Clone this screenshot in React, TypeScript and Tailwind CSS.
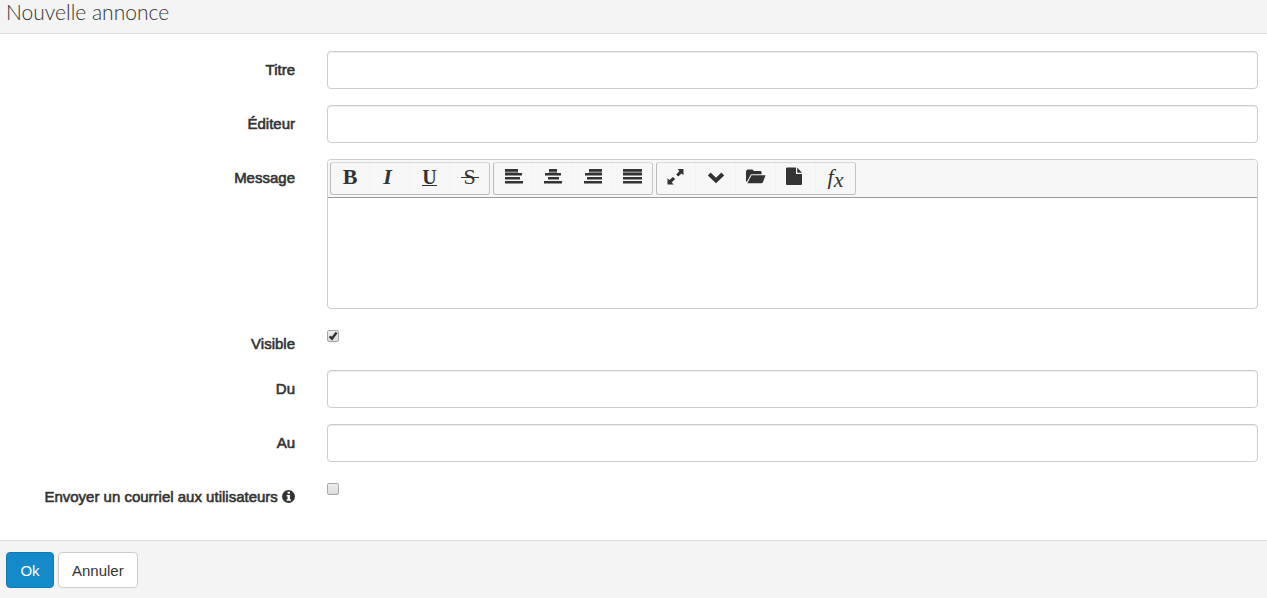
import { useState } from "react";
import type { ReactNode } from "react";

const fieldClass =
  "block h-[38px] w-full rounded border border-[#ccc] bg-white px-3 text-[15px] text-[#555] shadow-[inset_0_1px_1px_rgba(0,0,0,0.075)] outline-none focus:border-[#66afe9]";

interface FormRowProps {
  label: ReactNode;
  htmlFor: string;
  children: ReactNode;
}

function FormRow({ label, htmlFor, children }: FormRowProps) {
  return (
    <div className="flex">
      <label
        htmlFor={htmlFor}
        className="w-1/4 px-4 pt-2 text-right text-[15px] leading-[21px] [-webkit-text-stroke:0.04em_#333]"
      >
        {label}
      </label>
      <div className="w-3/4 px-4">{children}</div>
    </div>
  );
}

interface CheckBoxProps {
  id: string;
  defaultChecked?: boolean;
}

function CheckBox({ id, defaultChecked }: CheckBoxProps) {
  return (
    <div className="grid w-3 pt-[5px]">
      <input
        id={id}
        type="checkbox"
        defaultChecked={defaultChecked}
        className="peer col-start-1 row-start-1 size-3 appearance-none rounded-xs border border-[#a6a6a6] bg-linear-to-b from-[#eee] to-[#dcdcdc]"
      />
      <svg
        viewBox="0 0 12 12"
        className="pointer-events-none invisible col-start-1 row-start-1 size-3 peer-checked:visible"
      >
        <path d="M2.6 6.3L5 8.6L9.6 2.6" fill="none" stroke="#333" strokeWidth="2.4" />
      </svg>
    </div>
  );
}

interface AlignIconProps {
  bars: [number, number][];
}

// Each bar is [left, right] on a 19px wide glyph
function AlignIcon({ bars }: AlignIconProps) {
  return (
    <svg viewBox="0 0 19 16" className="h-4 w-[19px]" fill="#333">
      <rect x={bars[0][0]} y="2" width={bars[0][1] - bars[0][0]} height="2" opacity="0.55" />
      {bars.map(([left, right], i) => (
        <rect key={i} x={left} y={i * 4} width={right - left} height="2.5" />
      ))}
    </svg>
  );
}

interface Tool {
  title: string;
  icon: ReactNode;
}

const textTools: Tool[] = [
  { title: "Gras", icon: <b className="font-bold">B</b> },
  { title: "Italique", icon: <i className="pr-1 font-bold">I</i> },
  {
    title: "Souligné",
    icon: (
      <span className="border-b border-[#333] text-[20px] leading-[16px] font-bold">U</span>
    ),
  },
  {
    title: "Barré",
    icon: (
      <span className="grid items-center justify-items-center">
        <span className="col-start-1 row-start-1">S</span>
        <span className="col-start-1 row-start-1 h-px w-[18px] bg-[#333]" />
      </span>
    ),
  },
];

const alignTools: Tool[] = [
  { title: "Aligner à gauche", icon: <AlignIcon bars={[[1, 14], [1, 18], [1, 16], [1, 19]]} /> },
  { title: "Centrer", icon: <AlignIcon bars={[[6, 14], [2, 18], [5, 16], [1, 19]]} /> },
  { title: "Aligner à droite", icon: <AlignIcon bars={[[6, 19], [2, 19], [4, 19], [1, 19]]} /> },
  { title: "Justifier", icon: <AlignIcon bars={[[0, 19], [0, 19], [0, 19], [0, 19]]} /> },
];

const insertTools: Tool[] = [
  {
    title: "Plein écran",
    icon: (
      <svg viewBox="0 0 18 16" className="h-4 w-[18px]" fill="#333">
        <path d="M10.5 0H16.5V6.3L14.6 4.4L11.3 7.5L9.2 5.4L12.4 2.1ZM.5 15.5V9.2L2.5 11.1L5.9 8L8.1 10.1L4.7 13.4L6.8 15.5Z" />
      </svg>
    ),
  },
  {
    title: "Afficher plus",
    icon: (
      <svg viewBox="0 0 18 16" className="h-4 w-[18px]">
        <path d="M2.2 5L9 11.4L15.8 5" fill="none" stroke="#333" strokeWidth="4" />
      </svg>
    ),
  },
  {
    title: "Fichiers",
    icon: (
      <svg viewBox="0 0 20 16" className="h-4 w-5" fill="#333">
        <path d="M0 13V2L1.5 .5H6.5L8 2H14.5Q15.6 2 15.6 3.5V5.2H5L1.3 12Z" />
        <path d="M5.5 6.2H19.5L17 13Q16.5 14.2 15.2 14.2H1.4Z" />
      </svg>
    ),
  },
  {
    title: "Document",
    icon: (
      <svg viewBox="0 0 20 20" className="h-5 w-5" fill="#333">
        <path d="M0 1.5Q0 .5 1 .5H10V7H16V17Q16 18 15 18H1Q0 18 0 17ZM11.2 .5L16 5.8H11.2Z" />
      </svg>
    ),
  },
  {
    title: "Formule",
    icon: (
      <span className="flex items-start pt-[2px] italic">
        f<span className="pt-[3px]">x</span>
      </span>
    ),
  },
];

function ToolGroup({ tools }: { tools: Tool[] }) {
  return (
    <div className="flex h-[33px] rounded-[3px] border border-[#d9d9d9] border-r-[#c5c5c5] border-b-[#bbb] border-l-[#bbb]">
      {tools.map(({ title, icon }, i) => (
        <button
          key={title}
          type="button"
          title={title}
          aria-label={title}
          className={`flex h-7 items-center justify-center font-['Liberation_Serif',serif] text-[22px] leading-none text-[#333] hover:bg-[#eee] ${
            i > 0 ? "w-10 border-l border-[#f2f2f2]" : "w-[38px]"
          }`}
        >
          {icon}
        </button>
      ))}
    </div>
  );
}

function InfoIcon() {
  return (
    <svg viewBox="0 0 14 14" className="inline-block size-[13px] align-[-1px]">
      <circle cx="7" cy="7" r="7" fill="#333" />
      <path d="M6 2H8.6V4H6ZM5 5.4H8.6V10H9.6V11.6H5V10H6V7H5Z" fill="#fff" />
    </svg>
  );
}

export default function App() {
  const [title, setTitle] = useState("");
  const [editor, setEditor] = useState("");
  const [from, setFrom] = useState("");
  const [to, setTo] = useState("");

  return (
    <form
      className="overflow-hidden bg-white font-['Liberation_Sans',Arial,sans-serif] text-[#333]"
      onSubmit={(e) => e.preventDefault()}
    >
      <header className="h-[34px] border-b border-[#ddd] bg-[#f4f4f4] px-[6px]">
        <h1 className="font-['Lato',sans-serif] text-[21px] leading-6 font-light">
          Nouvelle annonce
        </h1>
      </header>

      <div className="-mr-[7px] -ml-[10px] flex flex-col gap-4 pt-[17px] pb-[33px]">
        <FormRow label="Titre" htmlFor="title">
          <input
            id="title"
            type="text"
            value={title}
            onChange={(e) => setTitle(e.target.value)}
            className={fieldClass}
          />
        </FormRow>
        <FormRow label="Éditeur" htmlFor="editor">
          <input
            id="editor"
            type="text"
            value={editor}
            onChange={(e) => setEditor(e.target.value)}
            className={fieldClass}
          />
        </FormRow>
        <FormRow label="Message" htmlFor="message">
          <div className="overflow-hidden rounded border border-[#ccc]">
            <div className="flex flex-wrap gap-[3px] border-b border-[#999] bg-[#f7f7f7] px-[2px] pt-[2px] pb-[2px]">
              <ToolGroup tools={textTools} />
              <ToolGroup tools={alignTools} />
              <ToolGroup tools={insertTools} />
            </div>
            <textarea
              id="message"
              className="block h-[110px] w-full resize-none px-3 py-2 text-[15px] outline-none"
            />
          </div>
        </FormRow>
        <FormRow label="Visible" htmlFor="visible">
          <CheckBox id="visible" defaultChecked />
        </FormRow>
        <FormRow label="Du" htmlFor="from">
          <input
            id="from"
            type="text"
            value={from}
            onChange={(e) => setFrom(e.target.value)}
            className={fieldClass}
          />
        </FormRow>
        <FormRow label="Au" htmlFor="to">
          <input
            id="to"
            type="text"
            value={to}
            onChange={(e) => setTo(e.target.value)}
            className={fieldClass}
          />
        </FormRow>
        <FormRow
          label={
            <>
              Envoyer un courriel aux utilisateurs <InfoIcon />
            </>
          }
          htmlFor="notify"
        >
          <CheckBox id="notify" />
        </FormRow>
      </div>

      <footer className="flex gap-1 border-t border-[#ddd] bg-[#f4f4f4] px-[6px] pt-[11px] pb-[10px]">
        <button
          type="submit"
          className="h-9 min-w-12 rounded border border-[#1079b2] bg-[#158ac9] px-[13px] pt-[2px] text-[15px] text-white hover:bg-[#1079b2]"
        >
          Ok
        </button>
        <button
          type="button"
          className="h-9 min-w-12 rounded border border-[#ccc] bg-white px-[13px] pt-[2px] text-[15px] text-[#333] hover:bg-[#e6e6e6]"
        >
          Annuler
        </button>
      </footer>
    </form>
  );
}
